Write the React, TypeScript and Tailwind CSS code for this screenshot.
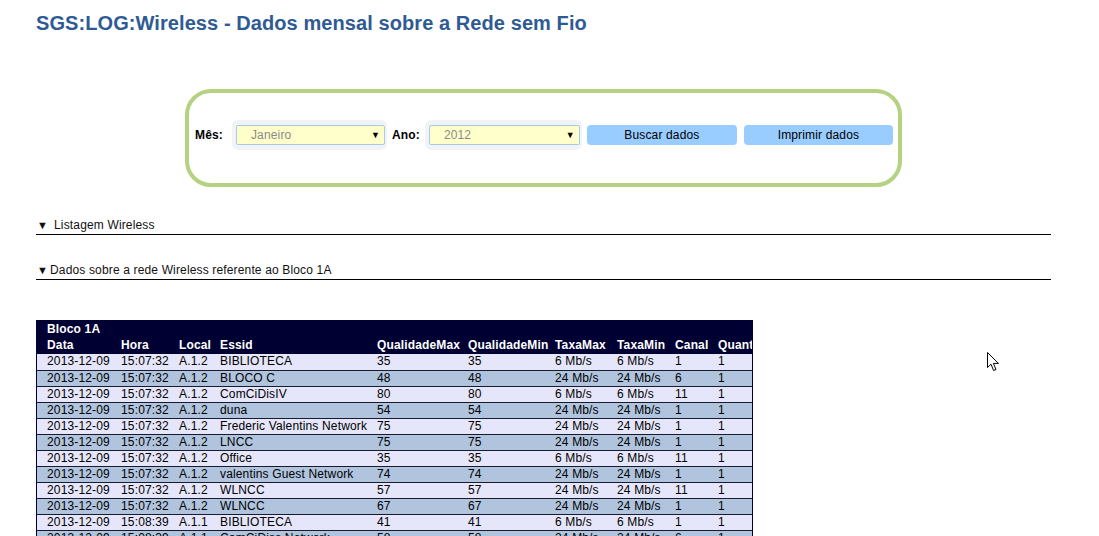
import React from "react";

type Row = {
  data: string;
  hora: string;
  local: string;
  essid: string;
  qMax: string;
  qMin: string;
  tMax: string;
  tMin: string;
  canal: string;
  quant: string;
};

const rows: Row[] = [
  { data: "2013-12-09", hora: "15:07:32", local: "A.1.2", essid: "BIBLIOTECA", qMax: "35", qMin: "35", tMax: "6 Mb/s", tMin: "6 Mb/s", canal: "1", quant: "1" },
  { data: "2013-12-09", hora: "15:07:32", local: "A.1.2", essid: "BLOCO C", qMax: "48", qMin: "48", tMax: "24 Mb/s", tMin: "24 Mb/s", canal: "6", quant: "1" },
  { data: "2013-12-09", hora: "15:07:32", local: "A.1.2", essid: "ComCiDisIV", qMax: "80", qMin: "80", tMax: "6 Mb/s", tMin: "6 Mb/s", canal: "11", quant: "1" },
  { data: "2013-12-09", hora: "15:07:32", local: "A.1.2", essid: "duna", qMax: "54", qMin: "54", tMax: "24 Mb/s", tMin: "24 Mb/s", canal: "1", quant: "1" },
  { data: "2013-12-09", hora: "15:07:32", local: "A.1.2", essid: "Frederic Valentins Network", qMax: "75", qMin: "75", tMax: "24 Mb/s", tMin: "24 Mb/s", canal: "1", quant: "1" },
  { data: "2013-12-09", hora: "15:07:32", local: "A.1.2", essid: "LNCC", qMax: "75", qMin: "75", tMax: "24 Mb/s", tMin: "24 Mb/s", canal: "1", quant: "1" },
  { data: "2013-12-09", hora: "15:07:32", local: "A.1.2", essid: "Office", qMax: "35", qMin: "35", tMax: "6 Mb/s", tMin: "6 Mb/s", canal: "11", quant: "1" },
  { data: "2013-12-09", hora: "15:07:32", local: "A.1.2", essid: "valentins Guest Network", qMax: "74", qMin: "74", tMax: "24 Mb/s", tMin: "24 Mb/s", canal: "1", quant: "1" },
  { data: "2013-12-09", hora: "15:07:32", local: "A.1.2", essid: "WLNCC", qMax: "57", qMin: "57", tMax: "24 Mb/s", tMin: "24 Mb/s", canal: "11", quant: "1" },
  { data: "2013-12-09", hora: "15:07:32", local: "A.1.2", essid: "WLNCC", qMax: "67", qMin: "67", tMax: "24 Mb/s", tMin: "24 Mb/s", canal: "1", quant: "1" },
  { data: "2013-12-09", hora: "15:08:39", local: "A.1.1", essid: "BIBLIOTECA", qMax: "41", qMin: "41", tMax: "6 Mb/s", tMin: "6 Mb/s", canal: "1", quant: "1" },
  { data: "2013-12-09", hora: "15:08:39", local: "A.1.1", essid: "ComCiDiss Network", qMax: "58", qMin: "58", tMax: "24 Mb/s", tMin: "24 Mb/s", canal: "6", quant: "1" },
  { data: "2013-12-09", hora: "15:08:39", local: "A.1.1", essid: "duna", qMax: "50", qMin: "50", tMax: "24 Mb/s", tMin: "24 Mb/s", canal: "1", quant: "1" },
];

function FakeSelect({ value, width }: { value: string; width: string }) {
  return (
    <div className={`${width} rounded-[6px] bg-[#f1f3f7] py-[5px] pl-[4px] pr-[2px]`}>
      <div className="flex h-[20px] items-center justify-between rounded-[2px] border border-[#a9cbe8] bg-[#ffffcc] pl-[14px] pr-[4px]">
        <span className="text-[12px] text-[#8a8a8a]">{value}</span>
        <span className="text-[9px] leading-none text-black">▼</span>
      </div>
    </div>
  );
}

function SectionTitle({ children, gap }: { children: React.ReactNode; gap: string }) {
  return (
    <div className="flex items-center border-b border-black pb-[2px] text-[12px] leading-[14px] text-[#111]">
      <span className={`pl-[1px] text-[11px] ${gap}`}>▼</span>
      <span>{children}</span>
    </div>
  );
}

export default function App() {
  return (
    <main className="relative min-h-[536px] bg-white pl-[36px] font-['Liberation_Sans',Arial,sans-serif] tracking-[0.15px]">
      <h1 className="pt-[12px] text-[20px] font-bold leading-[23px] tracking-[0.08px] text-[#2f5b94]">
        SGS:LOG:Wireless - Dados mensal sobre a Rede sem Fio
      </h1>

      <div className="w-[1015px]">
        <div className="mx-auto mt-[54px] flex h-[98px] w-[717px] items-start rounded-[26px] border-4 border-[#b4d282] pl-[6px] pt-[27px]">
          <div className="flex items-center text-[12px]">
            <span className="mr-[9px] font-bold text-black">Mês:</span>
            <FakeSelect value="Janeiro" width="w-[155px]" />
            <span className="ml-[5px] mr-[5px] font-bold text-black">Ano:</span>
            <FakeSelect value="2012" width="w-[157px]" />
            <button className="ml-[5px] h-[20px] w-[150px] rounded-[4px] bg-[#99ccff] text-[12px] tracking-[0.15px] text-black">
              Buscar dados
            </button>
            <button className="ml-[7px] h-[20px] w-[149px] rounded-[4px] bg-[#99ccff] text-[12px] tracking-[0.15px] text-black">
              Imprimir dados
            </button>
          </div>
        </div>

        <div className="mt-[31px]">
          <SectionTitle gap="mr-[6px]">Listagem Wireless</SectionTitle>
        </div>
        <div className="mt-[28px]">
          <SectionTitle gap="mr-[2px]">Dados sobre a rede Wireless referente ao Bloco 1A</SectionTitle>
        </div>
      </div>

      <div className="mt-[40px] w-[717px] overflow-hidden border-x border-[#000033]">
        <table className="w-[760px] table-fixed border-collapse text-[12px] leading-[15px] text-black">
          <colgroup>
            <col className="w-[84px]" />
            <col className="w-[58px]" />
            <col className="w-[41px]" />
            <col className="w-[157px]" />
            <col className="w-[91px]" />
            <col className="w-[87px]" />
            <col className="w-[62px]" />
            <col className="w-[58px]" />
            <col className="w-[43px]" />
            <col className="w-[79px]" />
          </colgroup>
          <thead className="bg-[#000033] font-bold text-white">
            <tr className="h-[17px]">
              <th colSpan={10} className="pl-[10px] pt-[1px] text-left">Bloco 1A</th>
            </tr>
            <tr className="h-[17px]">
              <th className="pl-[10px] text-left">Data</th>
              <th className="text-left">Hora</th>
              <th className="text-left">Local</th>
              <th className="text-left">Essid</th>
              <th className="text-left">QualidadeMax</th>
              <th className="text-left">QualidadeMin</th>
              <th className="text-left">TaxaMax</th>
              <th className="text-left">TaxaMin</th>
              <th className="text-left">Canal</th>
              <th className="whitespace-nowrap text-left">Quantidade</th>
            </tr>
          </thead>
          <tbody>
            {rows.map((r, i) => (
              <tr
                key={i}
                className={`h-[16px] border-b border-[#1a1a2e] ${i % 2 === 0 ? "bg-[#e6e6fa]" : "bg-[#b0c4de]"}`}
              >
                <td className="whitespace-nowrap pl-[10px]">{r.data}</td>
                <td className="whitespace-nowrap">{r.hora}</td>
                <td className="whitespace-nowrap">{r.local}</td>
                <td className="whitespace-nowrap">{r.essid}</td>
                <td>{r.qMax}</td>
                <td>{r.qMin}</td>
                <td className="whitespace-nowrap">{r.tMax}</td>
                <td className="whitespace-nowrap">{r.tMin}</td>
                <td>{r.canal}</td>
                <td>{r.quant}</td>
              </tr>
            ))}
          </tbody>
        </table>
      </div>

      {/* mouse pointer captured in the screenshot */}
      <svg
        className="absolute left-[987px] top-[352px]"
        width="13"
        height="20"
        viewBox="0 0 13 20"
      >
        <path
          d="M0.5 0.5 L0.5 15.5 L4 12.2 L6.6 18.5 L9 17.5 L6.4 11.4 L11.5 11.4 Z"
          fill="white"
          stroke="black"
          strokeWidth="1"
          strokeLinejoin="miter"
        />
      </svg>
    </main>
  );
}
